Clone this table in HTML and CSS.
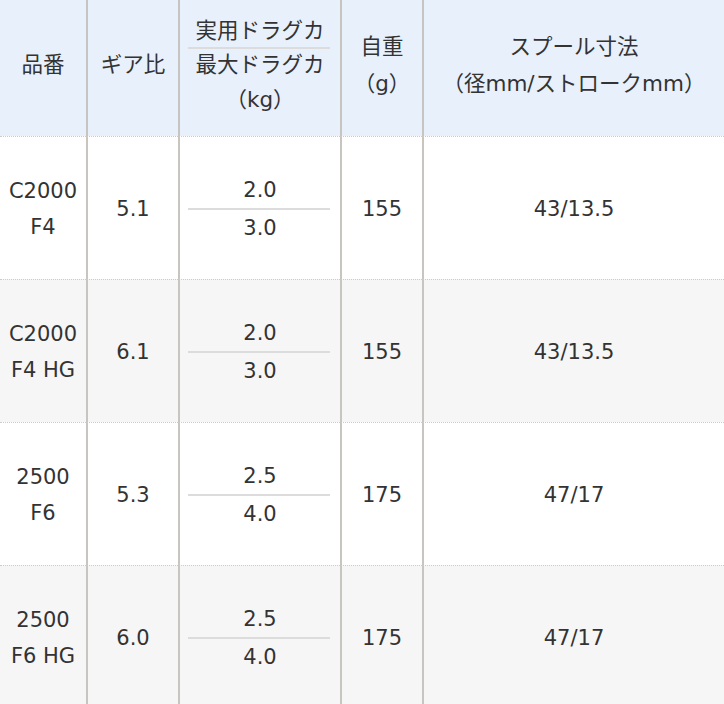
FILE: index.html
```html
<!DOCTYPE html>
<html lang="ja">
<head>
<meta charset="utf-8">
<link rel="stylesheet" href="styles.css">
</head>
<body>
<table class="spec">
  <thead>
    <tr>
      <th class="c1">品番</th>
      <th class="c2">ギア比</th>
      <th class="c3">
        <div class="h-l1">実用ドラグカ</div>
        <div class="rule"></div>
        <div class="h-l2">最大ドラグカ</div>
        <div class="h-l3">（kg）</div>
      </th>
      <th class="c4"><div class="hl">自重</div><div class="hl">（g）</div></th>
      <th class="c5"><div class="hl">スプール寸法</div><div class="hl">（径mm/ストロークmm）</div></th>
    </tr>
  </thead>
  <tbody>
    <tr>
      <td>C2000<br>F4</td>
      <td>5.1</td>
      <td><div class="v">2.0</div><div class="rule"></div><div class="v">3.0</div></td>
      <td>155</td>
      <td>43/13.5</td>
    </tr>
    <tr class="alt">
      <td>C2000<br>F4 HG</td>
      <td>6.1</td>
      <td><div class="v">2.0</div><div class="rule"></div><div class="v">3.0</div></td>
      <td>155</td>
      <td>43/13.5</td>
    </tr>
    <tr>
      <td>2500<br>F6</td>
      <td>5.3</td>
      <td><div class="v">2.5</div><div class="rule"></div><div class="v">4.0</div></td>
      <td>175</td>
      <td>47/17</td>
    </tr>
    <tr class="alt">
      <td>2500<br>F6 HG</td>
      <td>6.0</td>
      <td><div class="v">2.5</div><div class="rule"></div><div class="v">4.0</div></td>
      <td>175</td>
      <td>47/17</td>
    </tr>
  </tbody>
</table>
</body>
</html>
```

FILE: styles.css
```css
html, body {
  margin: 0;
  padding: 0;
  background: #ffffff;
}

body {
  overflow: hidden;
  font-family: "DejaVu Sans", "Noto Sans CJK JP", sans-serif;
  color: #333333;
}

.spec {
  width: 724px;
  border-collapse: separate;
  border-spacing: 0;
  table-layout: fixed;
  font-size: 21px;
}

.spec th,
.spec td {
  padding: 0;
  text-align: center;
  vertical-align: middle;
  border-left: 2px solid #c8c4c0;
}

.spec th:first-child,
.spec td:first-child {
  border-left: none;
}

.spec th.c1 { width: 86px; }
.spec th.c2 { width: 90px; }
.spec th.c3 { width: 160px; }
.spec th.c4 { width: 80px; }
.spec th.c5 { width: auto; }

.spec thead th {
  height: 130px;
  padding-bottom: 6px;
  background: #e8f0fc;
  font-weight: normal;
  font-family: "DejaVu Sans", "Noto Sans CJK JP", sans-serif;
  font-size: 21.5px;
  line-height: 36px;
}

.hl {
  line-height: 37px;
}

.h-l1 {
  line-height: 32px;
}

.h-l2 {
  line-height: 32px;
}

.h-l3 {
  line-height: 32px;
  margin-top: 3px;
}

.rule {
  height: 2px;
  background: #dcdcdc;
  margin: 0 10px 0 8px;
}

.spec tbody td {
  height: 141px;
  padding-top: 1px;
  border-top: 1px dotted #cccccc;
  line-height: 36px;
  background: #ffffff;
}

.spec tbody tr.alt td {
  background: #f6f6f6;
}

.v {
  line-height: 36px;
}
```
